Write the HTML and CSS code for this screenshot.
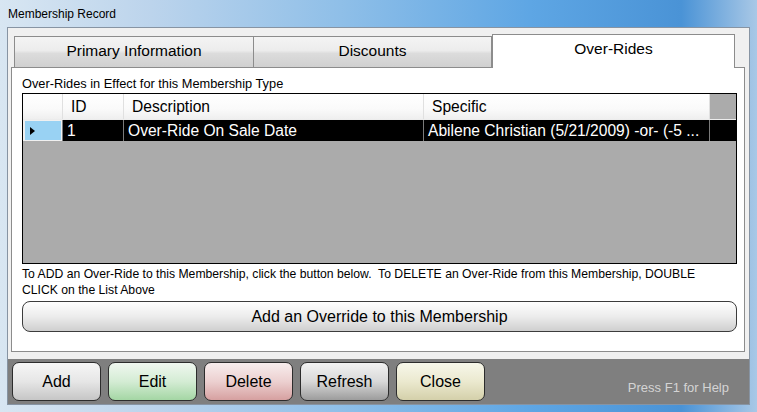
FILE: index.html
```html
<!DOCTYPE html>
<html lang="en">
<head>
    <meta charset="UTF-8">
    <title>Membership Record</title>
    <link rel="stylesheet" href="styles.css">
</head>
<body>
    <div class="window">
        <div class="titlebar">Membership Record</div>

        <div class="client">
            <div class="tabs-area">
                <!-- Tab headers -->
                <div class="tabstrip">
                    <div class="tab tab-first">Primary Information</div>
                    <div class="tab">Discounts</div>
                    <div class="tab tab-active">Over-Rides</div>
                </div>

                <!-- Over-Rides page -->
                <div class="panel">
                    <div class="caption">Over-Rides in Effect for this Membership Type</div>

                    <div class="grid">
                        <div class="grid-row grid-head">
                            <div class="cell cell-rowhead"></div>
                            <div class="cell col-id">ID</div>
                            <div class="cell col-desc">Description</div>
                            <div class="cell col-spec">Specific</div>
                        </div>
                        <div class="grid-row grid-data">
                            <div class="cell cell-rowhead"><span class="arrow"></span></div>
                            <div class="cell col-id">1</div>
                            <div class="cell col-desc">Over-Ride On Sale Date</div>
                            <div class="cell col-spec">Abilene Christian (5/21/2009) -or- (-5 ...</div>
                        </div>
                    </div>

                    <div class="hint">To ADD an Over-Ride to this Membership, click the button below.&nbsp; To DELETE an Over-Ride from this Membership, DOUBLE<br>CLICK on the List Above</div>

                    <button type="button" class="wide-btn">Add an Override to this Membership</button>
                </div>
            </div>

            <!-- Bottom command bar -->
            <div class="buttonbar">
                <button type="button" class="cmd cmd-add">Add</button>
                <button type="button" class="cmd cmd-edit">Edit</button>
                <button type="button" class="cmd cmd-delete">Delete</button>
                <button type="button" class="cmd cmd-refresh">Refresh</button>
                <button type="button" class="cmd cmd-close">Close</button>
                <div class="help">Press F1 for Help</div>
            </div>
        </div>
    </div>
</body>
</html>
```

FILE: styles.css
```css
body {
    margin: 0;
    font-family: "Liberation Sans", Arial, sans-serif;
}
.window {
    width: 757px;
    height: 412px;
    box-sizing: border-box;
    display: flex;
    flex-direction: column;
    padding: 0 7px 7px 7px;
    background:
        linear-gradient(90deg, #d8e6f2 0%, #bcd4ec 20%, #8fbfe8 45%, #5ea6e4 70%, #4a93d6 90%, #a9c8e6 100%);
}
.titlebar {
    height: 27px;
    display: flex;
    align-items: center;
    padding-left: 1px;
    font-size: 12px;
    color: #000;
}
.client {
    flex: 1;
    display: flex;
    flex-direction: column;
    border: 1px solid #8794a3;
    background: #f0f0f0;
}

/* tabs */
.tabs-area {
    padding: 6px 4px 0 3px;
}
.tabstrip {
    display: flex;
    align-items: flex-end;
    padding-left: 3px;
    height: 33px;
}
.tab {
    width: 238px;
    height: 31px;
    box-sizing: border-box;
    border: 1px solid #8c8c8c;
    border-left: none;
    border-bottom: none;
    background: linear-gradient(#f4f4f4 0%, #ececec 45%, #dcdcdc 55%, #d0d0d0 100%);
    font-size: 15.5px;
    text-align: center;
    line-height: 28px;
}
.tab-first {
    width: 240px;
    border-left: 1px solid #8c8c8c;
}
.tab-active {
    width: 243px;
    height: 34px;
    background: #fff;
    line-height: 28px;
    position: relative;
    top: 1px;
    border-left: 1px solid #8c8c8c;
}
.panel {
    height: 285px;
    box-sizing: border-box;
    border: 1px solid #8c8c8c;
    background: #fff;
    padding: 8px 7px 0 10px;
}
.caption {
    font-size: 12.8px;
    line-height: 16px;
    margin-bottom: 1px;
}

/* data grid */
.grid {
    height: 171px;
    box-sizing: border-box;
    border: 1px solid #000;
    background: #ababab;
}
.grid-row {
    display: flex;
}
.grid-head {
    height: 25px;
    border-bottom: 1px solid #ececec;
}
.grid-head .cell {
    background: linear-gradient(#ffffff 0%, #fafafa 60%, #efefef 100%);
    border-right: 1px solid #e0e0e0;
    padding-left: 8px;
    line-height: 25px;
}
.grid-data {
    height: 21px;
    background: #000;
    color: #fff;
}
.grid-data .cell {
    border-right: 1px solid #7a7a7a;
    padding-left: 4px;
    line-height: 21px;
}
.cell {
    box-sizing: border-box;
    font-size: 15.6px;
    white-space: nowrap;
    overflow: hidden;
}
.cell-rowhead {
    width: 40px;
}
.grid-data .cell-rowhead {
    background: #f0f0f0;
    padding: 1px 1px 1px 2px;
    display: flex;
}
.grid-data .cell-rowhead .arrow {
    flex: 1;
    background: #99d2f3;
    position: relative;
}
.arrow::after {
    content: "";
    position: absolute;
    left: 5px;
    top: 6px;
    border-left: 5px solid #000;
    border-top: 4px solid transparent;
    border-bottom: 4px solid transparent;
}
.col-id {
    width: 61px;
}
.col-desc {
    width: 300px;
}
.col-spec {
    width: 286px;
}

.hint {
    font-size: 12.2px;
    line-height: 16px;
    margin-top: 2px;
    white-space: nowrap;
}
.wide-btn {
    display: block;
    width: 100%;
    height: 31px;
    margin-top: 3px;
    border: 1px solid #3c3c3c;
    border-radius: 8px;
    background: linear-gradient(#fefefe 0%, #ececec 50%, #cfcfcf 100%);
    font-family: "Liberation Sans", Arial, sans-serif;
    font-size: 16px;
    color: #000;
}

/* bottom bar */
.buttonbar {
    flex: 1;
    margin-top: 7px;
    background: #7f7f7f;
    display: flex;
    align-items: flex-start;
    gap: 7px;
    padding: 3px 0 0 4px;
}
.cmd {
    width: 89px;
    height: 39px;
    border: 1px solid #2c2c2c;
    border-radius: 7px;
    font-family: "Liberation Sans", Arial, sans-serif;
    font-size: 16px;
    color: #000;
    padding: 0;
}
.cmd-add {
    background: linear-gradient(#f6f6f6 0%, #e6e6e6 50%, #c6c6c6 100%);
}
.cmd-edit {
    background: linear-gradient(#f0f7f0 0%, #d4ecd4 50%, #a4d6a4 100%);
}
.cmd-delete {
    background: linear-gradient(#f7eded 0%, #ecd0d0 50%, #d6a0a0 100%);
}
.cmd-refresh {
    background: linear-gradient(#f2f2f2 0%, #d8d8d8 50%, #9c9c9c 100%);
}
.cmd-close {
    background: linear-gradient(#f7f7ea 0%, #ebe9cf 50%, #d4d0aa 100%);
}
.help {
    margin-left: auto;
    margin-right: 20px;
    margin-top: 18px;
    font-size: 13px;
    color: #d4d4d4;
}
```
